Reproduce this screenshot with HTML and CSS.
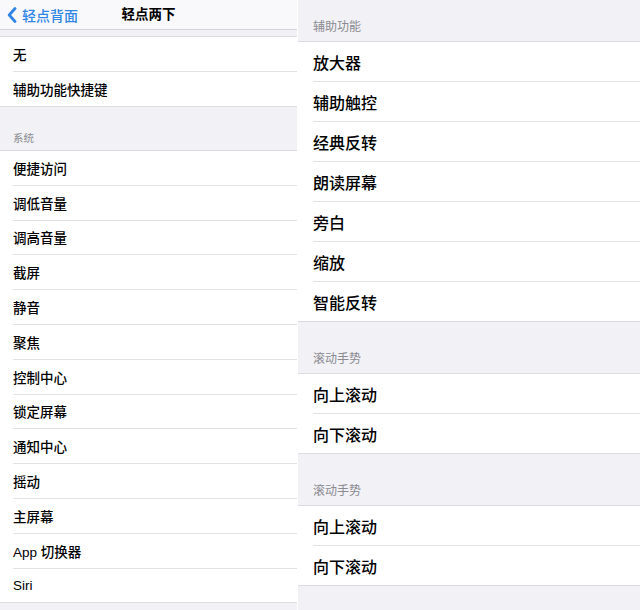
FILE: index.html
```html
<!DOCTYPE html>
<html>
<head>
    <meta charset="UTF-8">
    <title>轻点两下</title>
    <link rel="stylesheet" href="styles.css">
</head>
<body>
<div class="screen">
    <div class="panel left">
        <div class="nav">
            <div class="back">
                <svg class="chevron" width="10" height="16" viewBox="0 0 10 16">
                    <path d="M8 1.5 L2.2 8 L8 14.5" fill="none" stroke="#2f86e4" stroke-width="2.8" stroke-linecap="round" stroke-linejoin="round"/>
                </svg>
                <span>轻点背面</span>
            </div>
            <div class="nav-title">轻点两下</div>
        </div>
        <div class="spacer"></div>
        <div class="group">
            <div class="row">无</div>
            <div class="row">辅助功能快捷键</div>
        </div>
        <div class="section-title">系统</div>
        <div class="group">
            <div class="row">便捷访问</div>
            <div class="row">调低音量</div>
            <div class="row">调高音量</div>
            <div class="row">截屏</div>
            <div class="row">静音</div>
            <div class="row">聚焦</div>
            <div class="row">控制中心</div>
            <div class="row">锁定屏幕</div>
            <div class="row">通知中心</div>
            <div class="row">摇动</div>
            <div class="row">主屏幕</div>
            <div class="row">App 切换器</div>
            <div class="row">Siri</div>
        </div>
    </div>
    <div class="panel right">
        <div class="section-title first">辅助功能</div>
        <div class="group">
            <div class="row">放大器</div>
            <div class="row">辅助触控</div>
            <div class="row">经典反转</div>
            <div class="row">朗读屏幕</div>
            <div class="row">旁白</div>
            <div class="row">缩放</div>
            <div class="row">智能反转</div>
        </div>
        <div class="section-title">滚动手势</div>
        <div class="group">
            <div class="row">向上滚动</div>
            <div class="row">向下滚动</div>
        </div>
        <div class="section-title">滚动手势</div>
        <div class="group">
            <div class="row">向上滚动</div>
            <div class="row">向下滚动</div>
        </div>
    </div>
</div>
</body>
</html>
```

FILE: styles.css
```css
html, body {
    margin: 0;
    padding: 0;
    background-color: #fff;
    font-family: "Liberation Sans", "Noto Sans CJK SC", sans-serif;
    color: #000;
}

.screen {
    width: 640px;
    height: 610px;
    display: flex;
    overflow: hidden;
}

.panel {
    background-color: #f1f1f6;
    height: 100%;
    overflow: hidden;
}

.left {
    width: 297px;
}

.right {
    flex: 1;
    margin-left: 1px;
}

/* 顶部导航栏 */
.nav {
    height: 29px;
    background-color: #f9f9fb;
    border-bottom: 1px solid #d4d4d8;
    position: relative;
    display: flex;
    align-items: center;
}

.back {
    display: flex;
    align-items: center;
    padding-left: 7px;
    color: #2f86e4;
    font-size: 14px;
    font-weight: 500;
}

.back span {
    margin-left: 5px;
}

.nav-title {
    position: absolute;
    left: 0;
    right: 0;
    top: 0;
    height: 29px;
    line-height: 29px;
    text-align: center;
    font-size: 13.5px;
    font-weight: 600;
}

.spacer {
    height: 6px;
}

.group {
    background-color: #fff;
    border-top: 1px solid #dcdce0;
    border-bottom: 1px solid #dcdce0;
}

.row {
    display: flex;
    align-items: center;
    margin-left: 13px;
    font-size: 13.5px;
    font-weight: 500;
    height: 34px;
    border-bottom: 1px solid #e2e2e6;
}

.row:last-child {
    border-bottom: none;
}

.left .group:last-child .row {
    height: 33.8px;
}

.section-title {
    height: 43px;
    box-sizing: border-box;
    display: flex;
    align-items: flex-end;
    padding: 0 0 5px 13px;
    font-size: 10.5px;
    color: #8a8a8f;
}

/* 右侧面板 */
.right .row {
    height: 39px;
    font-size: 16px;
    margin-left: 15px;
}

.right .section-title {
    height: 51px;
    padding: 0 0 7px 15px;
    font-size: 12px;
}

.right .section-title.first {
    height: 41px;
}
```
